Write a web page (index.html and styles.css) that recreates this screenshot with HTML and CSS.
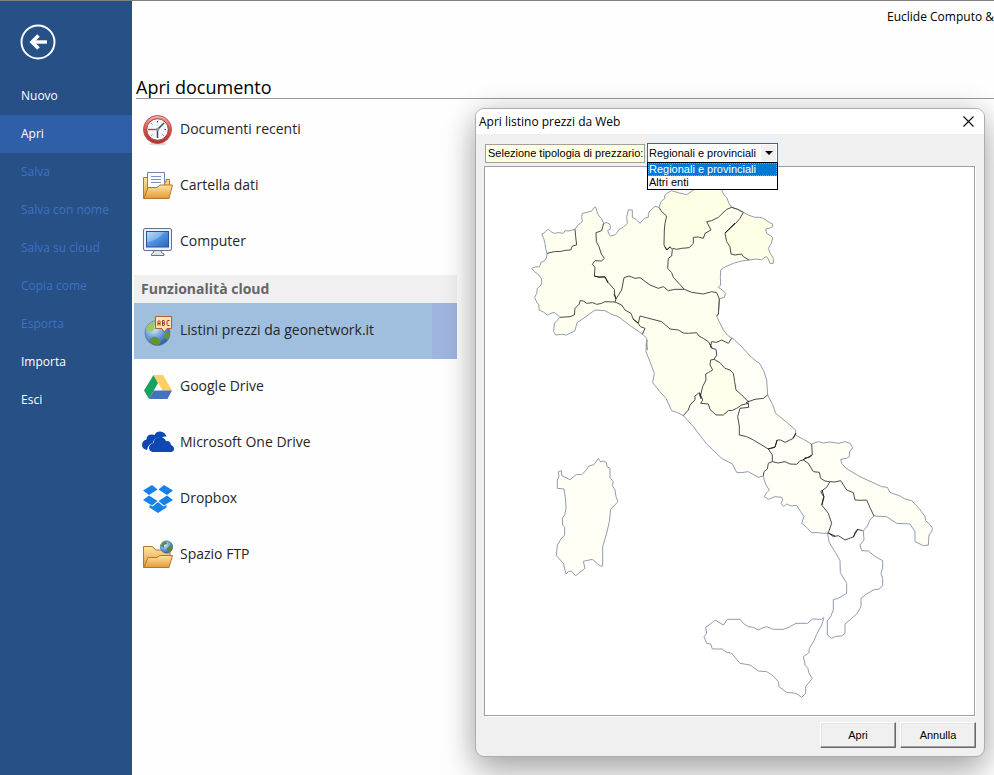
FILE: index.html
```html
<!DOCTYPE html>
<html lang="it">
<head>
<meta charset="utf-8">
<title>Euclide Computo - Apri documento</title>
<meta name="viewport" content="width=device-width, initial-scale=1">
<link rel="stylesheet" href="styles.css">
</head>
<body>
<div class="app">
  <nav class="sidebar" aria-label="File">
    <button class="back" type="button" aria-label="Indietro">
      <svg width="36" height="36" viewBox="0 0 36 36" fill="none" stroke="#fff"><circle cx="18" cy="18" r="16.5" stroke-width="2"/><path d="M27 18H12" stroke-width="3.4"/><path d="M18.5 11.5 12 18l6.500 6.500" stroke-width="3.600"/></svg>
    </button>
    <button class="item" type="button">Nuovo</button>
    <button class="item current" type="button">Apri</button>
    <button class="item" type="button" disabled>Salva</button>
    <button class="item" type="button" disabled>Salva con nome</button>
    <button class="item" type="button" disabled>Salva su cloud</button>
    <button class="item" type="button" disabled>Copia come</button>
    <button class="item" type="button" disabled>Esporta</button>
    <button class="item" type="button">Importa</button>
    <button class="item" type="button">Esci</button>
  </nav>

  <main class="main">
    <p class="product">Euclide Computo &amp;</p>
    <h1 class="heading">Apri documento</h1>

    <div class="sources">
      <button class="source" type="button">
        <svg class="icon" viewBox="0 0 32 32">
          <defs><linearGradient id="rim" x2="0" y2="1"><stop stop-color="#f3b5ad"/><stop offset=".5" stop-color="#d4524d"/><stop offset="1" stop-color="#b52b2b"/></linearGradient></defs>
          <ellipse cx="16" cy="30" rx="9" ry="1.500" fill="#ddd"/>
          <circle cx="15.500" cy="15.500" r="14" fill="url(#rim)" stroke="#c0504c"/>
          <circle cx="15.500" cy="15.500" r="10.800" fill="#f4f8fc" stroke="#a33a3a"/>
          <path d="M15.500 7v1.500M9.500 9.500l.8.800M21.500 21.500l-.8-.8M9.500 21.500l.8-.8M24 15.500h-1.500" stroke="#446" stroke-width="1"/>
          <path d="M15.500 15.500 22 9M15.500 15v9" stroke="#3c4c66" stroke-width="1.500"/><path d="M6 15.500h9" stroke="#c23b3b" stroke-width="1.300"/><circle cx="15.500" cy="15.500" r="1.800" fill="#8995a8"/>
        </svg>
        <span>Documenti recenti</span>
      </button>
      <button class="source" type="button">
        <svg class="icon" viewBox="0 0 32 32">
          <defs><linearGradient id="fold" x2="0" y2="1"><stop stop-color="#ffe3a3"/><stop offset="1" stop-color="#e39b35"/></linearGradient></defs>
          <path d="M1.500 28.500v-21h5V12H24V9.500h3.500V16L25 28.500z" fill="url(#fold)" stroke="#b9742c"/>
          <path d="M5.500 22V2.500h17V20z" fill="#fafcff" stroke="#7186ad"/>
          <path d="M9 6.500h10M9 9.500h10M9 12.500h10" stroke="#7d92bd"/>
          <path d="M2 28.500 6 17.500h9l3-2.500h12.500L27 28.500z" fill="url(#fold)" stroke="#b9742c"/>
        </svg>
        <span>Cartella dati</span>
      </button>
      <button class="source" type="button">
        <svg class="icon" viewBox="0 0 32 32">
          <defs><linearGradient id="scr" x2="1" y2="1"><stop stop-color="#a6d3fb"/><stop offset=".5" stop-color="#4e91df"/><stop offset="1" stop-color="#2b67bd"/></linearGradient></defs>
          <path d="M12 24h7l.500 2.500 2.500 1.500v1.500H9.500V28l2-1.500z" fill="#dfe5ec" stroke="#66758c"/>
          <rect x="1.500" y="2.500" width="28" height="22" rx="1.500" fill="#eef2f7" stroke="#5f7393"/>
          <rect x="4.500" y="5.500" width="22" height="15.500" fill="url(#scr)" stroke="#2455a0"/>
          <path d="M5 6h17Q17 14 5 16z" fill="#fff" opacity=".25"/>
        </svg>
        <span>Computer</span>
      </button>
    </div>

    <h2 class="group">Funzionalità cloud</h2>
    <div class="cloud">
      <button class="source selected" type="button">
        <svg class="icon" viewBox="0 0 32 32">
          <defs><radialGradient id="sea" cx=".35" cy=".3" r=".75"><stop stop-color="#e6f4ff"/><stop offset=".5" stop-color="#6fa5dc"/><stop offset="1" stop-color="#2a579c"/></radialGradient></defs>
          <circle cx="15.500" cy="18" r="12.500" fill="url(#sea)" stroke="#5577a8" stroke-width=".8"/>
          <path d="M4 13Q8 6 15 6l1 3-4 2 1 3-3 3-5-1z" fill="#9cc86a"/><path d="M8 24q4-4 8-1l3 4-2 3q-5 0-8-3zM23 18l5-1q0 5-3 8l-3-3z" fill="#64962f"/>
          <path d="M13.500 1.500h16v12H25L22 17l-2-3.500h-6.500z" fill="#ffe1b1" stroke="#ad6035"/>
          <path d="M16 10.500v-4l1-1 1 1v4M16 8.500h2M20.500 10.500v-5h1.500l.5 1-.5 1.500h-1.500M22 8l.500 1v1l-.5.500h-1.500M27.500 5.500h-2l-.5 1v3l.5 1h2" fill="none" stroke="#8a3a22"/>
        </svg>
        <span>Listini prezzi da geonetwork.it</span>
      </button>
      <button class="source" type="button">
        <svg class="icon" viewBox="0 0 32 32">
          <path d="M11.500 4 16 12 7 28 2 19.500z" fill="#18a260"/>
          <path d="M11.500 4h9.500l9 15.500h-9.500z" fill="#ffcf63"/>
          <path d="M11.800 19.500H30L25.500 28H7z" fill="#4571c0"/>
        </svg>
        <span>Google Drive</span>
      </button>
      <button class="source" type="button">
        <svg class="icon" viewBox="0 0 32 32">
          <path d="M5 23q-5-1-5-5 0-4.500 4.500-5.500 0-5 5.500-5 1.500 0 2.500.5 2-4 7-3.300 4 1 5 5-3-.7-5 1.300-4.500-1.500-7.500 2-1 1.500-1 3-5 1-6 7z" fill="#0d48b3"/>
          <path d="M10.500 25Q7 24 7 20.500t4.500-4.500q.5-6 6.500-6 4 0 6 4 4.500-.5 5 4 3 1 3 4 0 2.500-3 3z" fill="#0d48b3"/>
        </svg>
        <span>Microsoft One Drive</span>
      </button>
      <button class="source" type="button">
        <svg class="icon" viewBox="0 0 32 32" fill="#1482e6">
          <path d="M10 2 15.500 6.500 7 12 1 7.500zM22 2l9 5.500L25 12l-8.500-5.500zM7 12.500l8.500 5.500L10 22.500l-9-5.500zM25 12.500l6 4.500-9 5.500-5.500-4.500zM16 19l5.500 4.500 3-1.500v2.500L16 30l-8.500-5.500V22l3 1.500z"/>
        </svg>
        <span>Dropbox</span>
      </button>
      <button class="source" type="button">
        <svg class="icon" viewBox="0 0 32 32">
          <path d="M1.500 28.500v-21h9l3 3.500H28v8l-3 9.500z" fill="url(#fold)" stroke="#b9742c"/>
          <path d="M2 28.500 6 18.500h9l3-2h12.500L27 28.500z" fill="url(#fold)" stroke="#b9742c"/>
          <circle cx="24.500" cy="8" r="6.200" fill="url(#sea)" stroke="#47678f" stroke-width=".6"/>
          <path d="M19 7q1-4 5-5l1 3-3 1v3zM25 9l4-3q2 4-1 7l-3-1z" fill="#568a35"/>
        </svg>
        <span>Spazio FTP</span>
      </button>
    </div>

    <section class="dialog" role="dialog" aria-labelledby="dialog-title">
      <header class="titlebar">
        <h2 id="dialog-title">Apri listino prezzi da Web</h2>
        <button class="close" type="button" aria-label="Chiudi">
          <svg width="11" height="11" viewBox="0 0 11 11"><path d="M.5.5l10 10M10.500.5l-10 10" stroke="#111" stroke-width="1.200"/></svg>
        </button>
      </header>
      <div class="content">
        <div class="filter">
          <label for="kind">Selezione tipologia di prezzario:</label>
          <div class="combo">
            <select id="kind"><option>Regionali e provinciali</option><option>Altri enti</option></select>
            <ul class="options">
              <li class="active">Regionali e provinciali</li>
              <li>Altri enti</li>
            </ul>
          </div>
        </div>
        <div class="map">
          <svg viewBox="485 167 489 548" role="img" aria-label="Regioni d'Italia">
            <g transform="translate(525 180) scale(.33333)">
              <path fill="#fffff0" d="M105 412 88 397 68 406 42 390 42 375 29 352 37 325 50 310 50 297 20 265 44 260 48 247 64 235 66 220 60 190 50 162 70 147 88 160 115 160 120 152 150 148 172 125 172 100 200 93 212 81 220 105 236 130 255 133 256 147 248 152 257 168 275 160 282 148 307 130 310 90 322 90 322 112 345 130 358 115 370 112 375 93 390 79 402 82 620 82 655 97 672 240 625 250 587 270 587 315 602 340 598 352 583 357 580 402 575 408 595 450 620 475 610 490 590 480 560 485 570 538 560 570 540 605 525 645 475 707 440 692 423 655 405 635 383 608 388 580 375 545 363 515 367 510 365 475 353 463 320 440 280 410 240 392 210 390 180 412 156 428 150 452 125 465 92 465 86 455 88 430z"/>
              <path fill="#ffffe6" d="M402 82 408 65 420 55 425 40 440 32 485 44 505 30 530 10 570 5 590 30 597 45 605 52 620 82 605 88 580 112 560 122 545 125 558 150 540 160 535 175 505 172 493 203 470 208 442 205 425 210 417 195 418 150 425 108zM655 97 690 112 715 115 743 132 743 140 722 147 725 160 743 173 730 205 745 235 745 250 735 250 725 230 710 240 672 240 655 230 650 222 630 225 618 222 615 200 605 185 600 160 632 130z"/>
            </g>
            <g transform="translate(640 320) scale(.33333)">
              <path fill="#fffff8" d="M210 78 245 62 275 52 360 132 380 180 383 225 407 280 467 330 467 345 490 358 515 372 517 405 490 420 470 433 397 425 370 468 355 472 325 455 290 457 277 432 245 415 200 372 160 320 130 287 150 255 180 225 195 185 218 150 222 118z"/>
              <path fill="#ffffec" d="M222 118 240 128 255 145 280 160 288 210 325 250 290 265 265 272 250 285 228 285 210 268 205 252 182 250 182 225 198 180 197 162 218 150 210 135z"/>
            </g>
            <g transform="translate(750 400) scale(.33333)">
              <path fill="#fffff5" d="M67 185 105 185 140 193 160 180 175 190 190 215 208 217 212 235 238 245 230 262 212 275 218 300 215 315 235 340 245 370 235 398 185 398 155 370 162 350 140 316 110 312 101 320 93 310 95 292 75 290 55 298 43 290 58 270 48 255 40 228 55 190z"/>
              <path fill="#fffff5" d="M185 132 205 125 265 130 285 125 308 143 298 170 270 180 288 205 330 230 395 260 412 262 420 277 485 302 525 350 527 362 547 385 537 405 535 435 520 437 495 425 495 395 480 372 440 370 410 350 372 348 350 300 315 300 310 278 290 270 272 242 238 245 212 235 208 217 190 215 175 190 160 180 187 165z"/>
            </g>
            <g class="coast">
              <g transform="translate(525 180) scale(.33333)">
                <path d="M105 412 96 404 88 397 78 400 68 406 55 396 42 390 42 375 35 366 29 352 35 340 37 325 46 318 50 310 50 297 40 283 28 275 20 265 31 261 44 260 48 247 57 243 64 235 66 220 62 205 60 190 56 175 50 162 58 159 70 147 78 155 88 160 101 158 115 160 120 152 132 153 150 148 158 136 172 125 170 112 172 100 186 97 200 93 207 83 212 81 216 95 220 105 230 117 236 130 246 128 255 133 256 147 248 152 252 163 257 168 268 165 275 160 282 148 295 142 307 130 305 112 310 90 322 90 322 112 333 118 345 130 352 122 358 115 370 112 370 102 375 93 390 79 402 82 408 65 420 55 418 48 425 40 440 32 463 39 485 44 505 30 530 10 570 5 590 30 597 45 605 52 612 70 620 82 638 88 655 97 672 106 690 112 703 112 715 115 733 127 743 132 743 140 732 145 722 147 725 160 735 166 743 173 739 190 730 205 736 220 745 235 745 250 735 250 731 240 725 230 719 232 710 240 695 237 672 240 650 243 625 250 600 261 587 270 586 293 587 315 580 322 592 330 602 340 598 352 583 357 582 380 580 402 575 408 584 428 595 450 607 465 620 475"/>
                <path d="M105 412 88 430 86 455 92 465 110 463 125 465 150 452 156 428 180 412 210 390 240 392 257 402 280 410 320 440 353 463 365 475 367 510"/>
              </g>
              <g transform="translate(640 320) scale(.33333)">
                <path d="M22 90 18 75 22 60 20 62 18 95 30 125 43 160 38 188 60 215 78 235 95 272 113 278 130 287 160 320 200 372 245 415 277 432 290 457 303 458 325 455 355 472 370 468M467 345 467 330 439 306 407 280 398 254 383 225 380 180 372 154 360 132 334 112 305 80 275 52M467 345 490 358 515 372"/>
              </g>
              <g transform="translate(750 400) scale(.33333)">
                <path d="M40 228 43 240 48 255 58 270 50 278 43 290 55 298 75 290 95 292 98 300 93 310 101 320 110 312 123 318 140 316 152 335 162 350 155 370 170 382 185 398 208 398 220 401 235 398M340 392 352 378 360 360 372 348 410 350 440 370 480 372 495 395 495 425 520 437 535 435 537 405 545 395 547 385 541 375 527 362 525 350 507 325 485 302 465 297 450 288 420 277 412 262 395 260 330 230 288 205 275 190 272 178 290 175 298 170 299 155 308 143 300 130 285 125 265 130 240 126 220 129 205 125 185 132"/>
              </g>
              <g transform="translate(690 520) scale(.33333)">
                <path d="M412 38 418 68 436 97 450 122 451 158 470 190 470 220 450 232 443 236 430 238 430 270 422 290 412 302 412 345 425 355 437 349 455 348 465 340 465 312 483 297 500 282 513 260 513 235 530 222 550 210 567 207 578 197 578 175 573 160 578 145 578 122 555 109 535 93 515 92 510 75 522 60 520 32M402 293 395 315 380 343 372 362 358 385 357 398 340 410 346 437 354 445 356 458 367 475 347 500 347 520 335 532 318 520 290 517 267 500 265 485 250 468 230 455 205 453 180 435 150 430 125 400 108 396 97 387 67 387 62 372 50 370 42 350 50 340 47 322 60 313 75 300 100 315 112 298 150 298 161 311 175 320 190 322 205 330 217 324 230 320 250 328 280 328 298 321 318 310 352 310 368 297 395 298z"/>
              </g>
              <g transform="translate(540 440) scale(.33333)">
                <path fill="#fffff6" d="M175 55 182 66 190 63 200 68 201 80 210 85 210 113 220 125 217 137 225 150 228 170 234 185 212 208 208 245 200 280 188 320 188 378 180 378 157 358 130 364 135 385 107 407 95 394 86 394 78 402 70 370 49 347 52 315 63 297 74 285 74 262 68 255 67 235 74 225 78 205 77 180 72 147 52 145 52 120 57 110 55 95 64 92 65 107 90 119 110 103 125 104 138 91 147 78 162 74z"/>
              </g>
            </g>
            <g class="border">
              <g transform="translate(525 180) scale(.33333)">
                <path d="M150 148 152 170 155 195 142 198 137 210 120 211 110 214 88 215 66 220M236 130 230 152 213 158 214 185 222 200 229 222 238 235 230 243 210 242 202 253 210 262 208 288 222 292 240 290 250 308 268 328 269 343 273 357M105 412 135 410 148 405 150 385 163 372 165 362 175 363 185 370 203 368 215 373 230 370 240 365 270 366 290 375 300 390 318 400 325 418 340 430 346 440 360 445 352 463M270 366 273 357 290 330 297 293 312 288 330 295 345 293 375 315 400 325 415 320 430 332 450 328 478 328M402 82 410 95 425 108 420 130 418 150 417 195 425 210 435 200 442 208 440 228 430 235 428 265 440 278 445 292 478 328 500 337 535 342 560 335 575 338 583 357M583 357 580 402 575 408M442 205 455 208 470 205 493 203 505 190 505 172 520 171 535 175 540 160 558 150 545 125 560 122 580 112 605 88 620 82 638 88 655 97M655 97 645 115 632 130 600 160 605 185 615 200 618 222 630 225 650 222 655 230 672 240M340 430 345 408 360 412 410 425 435 447 460 450 475 459 490 460 515 458 522 468 535 475 550 485 557 497 560 485 575 487 590 480 610 490 620 475"/>
              </g>
              <g transform="translate(640 320) scale(.33333)">
                <path d="M210 78 215 85 228 88 230 105 222 118 212 120 210 135 218 150 206 157 197 162 198 180 188 200 182 225 188 240 182 250 205 252 210 268 228 285 250 285 265 272 277 271 290 265 305 255 325 250M180 230 178 218 165 228 165 240 150 255 145 270 130 287M222 118 240 128 255 145 270 150 280 160 284 185 288 210 305 225 325 245 345 238 370 235 383 225M325 248 326 262 300 265 293 290 298 318 298 345 320 350 340 360 385 387 405 382 412 360 422 360 435 367 460 355 467 340M385 387 397 405 397 425 385 430 382 447 372 455 370 468M397 425 415 429 435 425 450 432 470 433 480 422 490 420"/>
              </g>
              <g transform="translate(750 400) scale(.33333)">
                <path d="M185 132 187 165 178 173 165 173 160 180 175 190 190 215 208 217 212 235 225 243 238 245 255 246 272 242 290 270 310 278 315 300 332 301 350 300 361 325 372 348M240 245 230 262 212 275 221 290 215 315 235 340 245 370 235 398 250 410 265 407 285 420 312 410 316 395 322 388 338 392"/>
              </g>
            </g>
            <g class="border heavy">
              <path d="M594 276l5 1 6 0 3 6M614 294l2 5M665 247l2 3 3-3M735 223l-10 10M633 319l5 4M768 449l7-2 2-7M793 438l3-5M803 460l9-5M822 490l2 7-2 8M828 533l7 3M853 537l5-8M700 393l1 6M746 403l3-2M710 344l2 4"/>
            </g>
          </svg>
        </div>
        <div class="actions">
          <button class="push" type="button">Apri</button>
          <button class="push" type="button">Annulla</button>
        </div>
      </div>
    </section>
  </main>
</div>
</body>
</html>
```

FILE: styles.css
```css
* {
  box-sizing: border-box;
}

body {
  margin: 0;
  font-family: "Open Sans", "Noto Sans", sans-serif;
  font-size: 12px;
  color: #000;
  background: #fefefe;
  overflow: hidden;
}

button {
  font: inherit;
  color: inherit;
  background: none;
  border: 0;
  padding: 0;
}

h1,
h2,
p,
ul {
  margin: 0;
  padding: 0;
  font-weight: 400;
}

svg {
  display: block;
}

.app {
  display: flex;
  min-height: 100vh;
  border-top: 1px solid #808080;
}

.sidebar {
  display: flex;
  flex-direction: column;
  flex: none;
  width: 132px;
  background: #265086;
  color: #fff;
}

.back {
  align-self: flex-start;
  margin: 23px 20px 17px;
}

.item {
  height: 38px;
  padding: 0 21px 2px;
  text-align: left;
}

.item.current {
  background: #2f5fa8;
}

.item:disabled {
  color: #3f70c4;
}

.main {
  position: relative;
  flex: 1;
  min-width: 0;
}

.product {
  height: 72px;
  padding-top: 7px;
  line-height: 18px;
  text-align: right;
}

.heading {
  margin-left: 4px;
  padding-top: 4px;
  border-bottom: 1px solid #999;
  font-size: 18px;
  line-height: 21px;
}

.sources,
.group,
.cloud {
  width: 323px;
  margin-left: 2px;
}

.sources {
  padding: 3px 0 5px;
}

.source {
  display: flex;
  align-items: center;
  gap: 6px;
  width: 100%;
  height: 56px;
  padding-left: 8px;
  font-size: 14px;
  color: #262626;
  text-align: left;
}

.source span {
  padding-bottom: 3px;
}

.source.selected {
  background: linear-gradient(to right, #a0bfdf calc(100% - 25px), #a0b4e0 calc(100% - 25px));
}

.icon {
  flex: none;
  width: 32px;
  height: 32px;
}

.group {
  padding-left: 7px;
  font-size: 14px;
  font-weight: 700;
  line-height: 28px;
  color: #666;
  background: #f0f0f0;
}

.dialog {
  position: absolute;
  top: 107px;
  right: 9px;
  width: 510px;
  border: 1px solid #adadad;
  border-radius: 9px;
  background: #f0f0f0;
  box-shadow: 0 2px 28px rgba(0, 0, 0, 0.18), 0 18px 34px rgba(0, 0, 0, 0.24);
}

.titlebar {
  display: flex;
  align-items: center;
  justify-content: space-between;
  height: 25px;
  padding: 0 10px 0 3px;
  border-radius: 8px 8px 0 0;
  background: #fff;
}

.titlebar h2 {
  font-size: 12px;
}

.content {
  padding: 9px 8px 8px;
  font-family: "Liberation Sans", sans-serif;
  font-size: 11px;
}

.filter {
  display: flex;
  align-items: center;
  gap: 2px;
  margin-bottom: 3px;
}

.filter label {
  width: 160px;
  margin-left: 1px;
  padding: 0 2px;
  border: 1px solid #a0a0a0;
  background: #ffffe1;
  line-height: 17px;
  white-space: nowrap;
}

.combo {
  position: relative;
  width: 131px;
}

.combo::after {
  content: "";
  position: absolute;
  top: 2px;
  right: 2px;
  width: 15px;
  height: 16px;
  background: #f0f0f0;
  pointer-events: none;
}

.combo::before {
  content: "";
  position: absolute;
  z-index: 1;
  top: 8px;
  right: 5px;
  border: 4px solid transparent;
  border-top-color: #000;
  border-bottom: 0;
  pointer-events: none;
}

.combo select {
  display: block;
  width: 100%;
  height: 20px;
  padding: 0 1px;
  border: 1px solid #0078d7;
  border-radius: 0;
  background: #fff;
  appearance: none;
  font: inherit;
  color: #000;
}

.options {
  position: absolute;
  top: 19px;
  left: 0;
  width: 100%;
  border: 1px solid #000;
  background: #fff;
  list-style: none;
  line-height: 13px;
}

.options li {
  padding: 0 1px;
  white-space: nowrap;
}

.options .active {
  background: #0078d7;
  color: #fff;
  outline: 1px dotted #e88b2e;
  outline-offset: -1px;
}

.map {
  margin-right: 1px;
  border: 1px solid #a0a0a0;
  background: #fff;
  box-shadow: 1px 1px #fff;
}

.map svg {
  width: 100%;
  height: auto;
}

.coast,
.border {
  fill: none;
  stroke-width: 3;
  stroke-linejoin: round;
}

.coast {
  stroke: #929bad;
}

.border {
  stroke: #4a4a4a;
}

.heavy {
  stroke: #222;
  stroke-width: 1;
}

.actions {
  display: flex;
  justify-content: flex-end;
  gap: 4px;
  margin-top: 6px;
}

.push {
  width: 76px;
  height: 26px;
  border: 1px solid;
  border-color: #fff #696969 #696969 #fff;
  box-shadow: inset -1px -1px #a0a0a0, inset 1px 1px #e3e3e3;
}
```
